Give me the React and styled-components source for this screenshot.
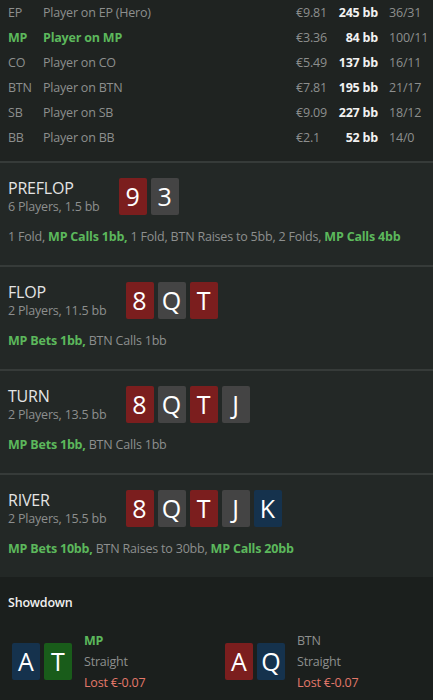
import React from 'react';
import styled, { createGlobalStyle } from 'styled-components';

const GlobalStyle = createGlobalStyle`
    html, body {
        margin: 0;
        padding: 0;
        background: #1b1f1d;
    }
    body {
        font-family: "Open Sans", "Noto Sans", sans-serif;
        letter-spacing: -0.2px;
    }
`;

const Page = styled.div`
    width: 433px;
    background: #1b1f1d;
`;

const PlayerTable = styled.div`
    background: #1f2321;
    padding: 0 8px 11px;
`;

const PlayerRow = styled.div`
    display: grid;
    grid-template-columns: 35px 1fr 41px 41px 47px;
    align-items: center;
    height: 25px;
    font-size: 12.5px;
    color: ${p => (p.active ? '#5cb85c' : '#8d8f8e')};
    font-weight: ${p => (p.active ? 700 : 400)};
`;

const Cell = styled.span`
    white-space: nowrap;
`;

const Money = styled.span`
    color: #8d8f8e;
    font-weight: 400;
    white-space: nowrap;
`;

const Stack = styled.span`
    color: #f2f2f2;
    font-weight: 700;
    text-align: right;
    white-space: nowrap;
`;

const Record = styled.span`
    color: #8d8f8e;
    font-weight: 400;
    padding-left: 11px;
    white-space: nowrap;
`;

const Street = styled.section`
    background: #232826;
    border-top: 2px solid #363b39;
    padding: 15px 8px 19px;
`;

const StreetHeader = styled.div`
    display: flex;
    align-items: center;
    gap: 19px;
    height: 37px;
`;

const StreetInfo = styled.div`
    display: flex;
    flex-direction: column;
`;

const StreetName = styled.div`
    font-size: 16px;
    line-height: 20px;
    color: #e4e4e4;
`;

const StreetMeta = styled.div`
    font-size: 12.5px;
    line-height: 18px;
    color: #8d8f8e;
    white-space: nowrap;
`;

const Cards = styled.div`
    display: flex;
    gap: 4px;
`;

const cardColors = {
    red: '#7b1e1e',
    gray: '#444444',
    blue: '#15324d',
    green: '#195c1a',
};

const Card = styled.div`
    width: 28px;
    height: 37px;
    border-radius: 2px;
    background: ${p => cardColors[p.color]};
    color: #ffffff;
    font-size: 25px;
    line-height: 37px;
    letter-spacing: 0;
    text-align: center;
`;

const Actions = styled.div`
    margin-top: 13px;
    font-size: 12.5px;
    line-height: 18px;
    color: #8d8f8e;
    white-space: nowrap;
`;

const Hl = styled.b`
    color: #5cb85c;
    font-weight: 700;
`;

const Showdown = styled.section`
    background: #1b1f1d;
    padding: 17px 8px 10px;
`;

const ShowdownTitle = styled.div`
    font-size: 12.5px;
    line-height: 18px;
    font-weight: 600;
    color: #f0f0f0;
`;

const Hands = styled.div`
    display: grid;
    grid-template-columns: 213px 1fr;
    margin-top: 18px;
    padding-left: 4px;
`;

const Hand = styled.div`
    display: flex;
    align-items: center;
    gap: 12px;
`;

const HandInfo = styled.div`
    display: flex;
    flex-direction: column;
    font-size: 12.5px;
    line-height: 21px;
`;

const HandPlayer = styled.div`
    color: ${p => (p.active ? '#5cb85c' : '#8d8f8e')};
    font-weight: ${p => (p.active ? 700 : 400)};
`;

const HandRank = styled.div`
    color: #8d8f8e;
`;

const HandResult = styled.div`
    color: #e4786a;
`;

const players = [
    { pos: 'EP', name: 'Player on EP (Hero)', money: '€9.81', stack: '245 bb', rec: '36/31' },
    { pos: 'MP', name: 'Player on MP', money: '€3.36', stack: '84 bb', rec: '100/11', active: true },
    { pos: 'CO', name: 'Player on CO', money: '€5.49', stack: '137 bb', rec: '16/11' },
    { pos: 'BTN', name: 'Player on BTN', money: '€7.81', stack: '195 bb', rec: '21/17' },
    { pos: 'SB', name: 'Player on SB', money: '€9.09', stack: '227 bb', rec: '18/12' },
    { pos: 'BB', name: 'Player on BB', money: '€2.1', stack: '52 bb', rec: '14/0' },
];

const board = [
    { r: '8', c: 'red' },
    { r: 'Q', c: 'gray' },
    { r: 'T', c: 'red' },
    { r: 'J', c: 'gray' },
    { r: 'K', c: 'blue' },
];

const streets = [
    {
        name: 'PREFLOP',
        meta: '6 Players, 1.5 bb',
        cards: [{ r: '9', c: 'red' }, { r: '3', c: 'gray' }],
        actions: [
            ['1 Fold, '], ['MP Calls 1bb,', true], [' 1 Fold, BTN Raises to 5bb, 2 Folds, '], ['MP Calls 4bb', true],
        ],
    },
    {
        name: 'FLOP',
        meta: '2 Players, 11.5 bb',
        cards: board.slice(0, 3),
        actions: [['MP Bets 1bb,', true], [' BTN Calls 1bb']],
    },
    {
        name: 'TURN',
        meta: '2 Players, 13.5 bb',
        cards: board.slice(0, 4),
        actions: [['MP Bets 1bb,', true], [' BTN Calls 1bb']],
    },
    {
        name: 'RIVER',
        meta: '2 Players, 15.5 bb',
        cards: board,
        actions: [['MP Bets 10bb,', true], [' BTN Raises to 30bb, '], ['MP Calls 20bb', true]],
    },
];

const hands = [
    { pos: 'MP', active: true, cards: [{ r: 'A', c: 'blue' }, { r: 'T', c: 'green' }], rank: 'Straight', result: 'Lost €-0.07' },
    { pos: 'BTN', cards: [{ r: 'A', c: 'red' }, { r: 'Q', c: 'blue' }], rank: 'Straight', result: 'Lost €-0.07' },
];

const App = () => {
    return (
        <Page>
            <GlobalStyle />
            <PlayerTable>
                {players.map(p => (
                    <PlayerRow key={p.pos} active={p.active}>
                        <Cell>{p.pos}</Cell>
                        <Cell>{p.name}</Cell>
                        <Money>{p.money}</Money>
                        <Stack>{p.stack}</Stack>
                        <Record>{p.rec}</Record>
                    </PlayerRow>
                ))}
            </PlayerTable>

            {streets.map(s => (
                <Street key={s.name}>
                    <StreetHeader>
                        <StreetInfo>
                            <StreetName>{s.name}</StreetName>
                            <StreetMeta>{s.meta}</StreetMeta>
                        </StreetInfo>
                        <Cards>
                            {s.cards.map((c, i) => (
                                <Card key={i} color={c.c}>{c.r}</Card>
                            ))}
                        </Cards>
                    </StreetHeader>
                    <Actions>
                        {s.actions.map(([text, hl], i) => (hl ? <Hl key={i}>{text}</Hl> : <span key={i}>{text}</span>))}
                    </Actions>
                </Street>
            ))}

            <Showdown>
                <ShowdownTitle>Showdown</ShowdownTitle>
                <Hands>
                    {hands.map(h => (
                        <Hand key={h.pos}>
                            <Cards>
                                {h.cards.map((c, i) => (
                                    <Card key={i} color={c.c}>{c.r}</Card>
                                ))}
                            </Cards>
                            <HandInfo>
                                <HandPlayer active={h.active}>{h.pos}</HandPlayer>
                                <HandRank>{h.rank}</HandRank>
                                <HandResult>{h.result}</HandResult>
                            </HandInfo>
                        </Hand>
                    ))}
                </Hands>
            </Showdown>
        </Page>
    );
};

export default App;
